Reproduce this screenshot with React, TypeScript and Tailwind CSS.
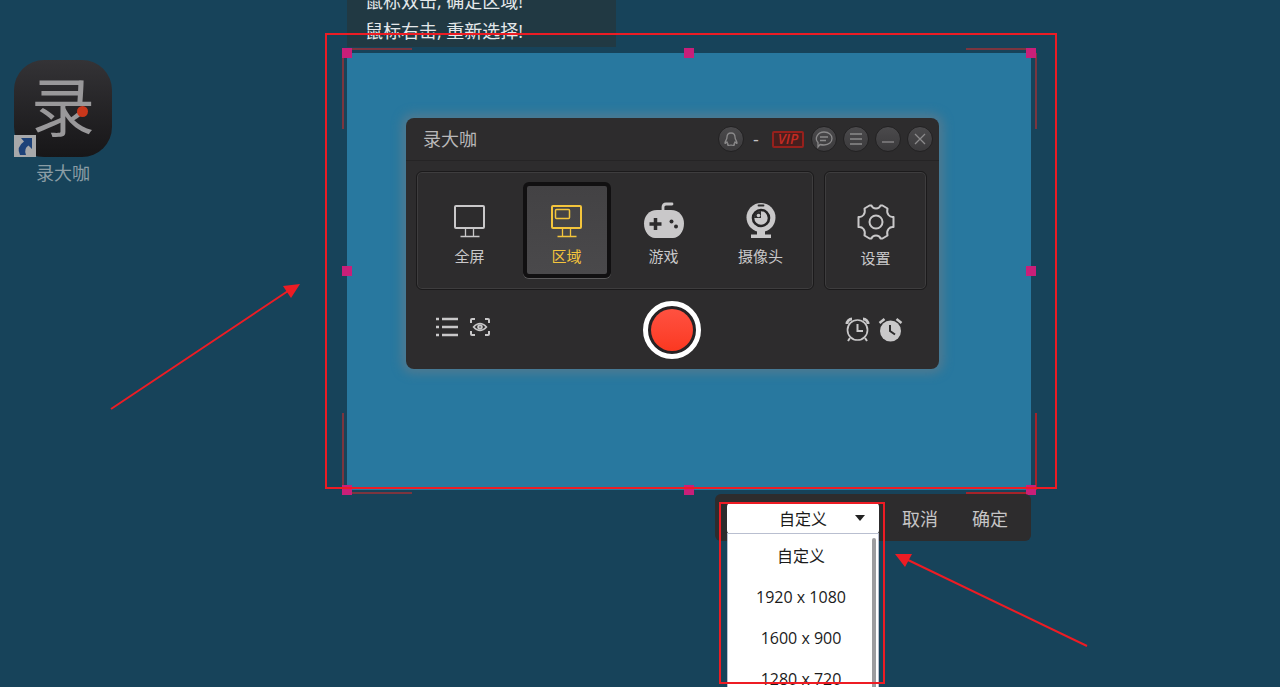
import React, { useState } from 'react';

const sizes = ['自定义', '1920 x 1080', '1600 x 900', '1280 x 720'];

const ScreenIcon = () => (
  <svg width="36" height="36" viewBox="0 0 36 36" fill="none" stroke="currentColor">
    <rect x="3" y="3" width="29" height="22" rx="1" strokeWidth="2" />
    <path d="M13.5 26v7M21.5 26v7M8.5 33.5h19" strokeWidth="1.3" />
  </svg>
);

const RegionIcon = () => (
  <svg width="36" height="36" viewBox="0 0 36 36" fill="none" stroke="currentColor">
    <rect x="3" y="3" width="29" height="22" rx="1" strokeWidth="2" />
    <rect x="6.5" y="6.5" width="14" height="9" rx="1" strokeWidth="1.5" />
    <path d="M13.5 26v7M21.5 26v7M8.5 33.5h19" strokeWidth="1.3" />
  </svg>
);

const GameIcon = () => (
  <svg width="42" height="38" viewBox="0 0 42 38">
    <path d="M20 12V6q0-3 3-3h6" fill="none" stroke="currentColor" strokeWidth="2.8" strokeLinecap="round" />
    <path
      d="M14 9h14c8 0 13 6 13 13.500 0 8-5 14.500-11 14.500H12C6 37 1 30.500 1 22.500 1 15 6 9 14 9z"
      fill="currentColor"
    />
    <path d="M12.500 17v12M6.500 23h12" stroke="#2d2c2d" strokeWidth="3.5" />
    <circle cx="28.500" cy="20.500" r="2" fill="#2d2c2d" />
    <circle cx="33" cy="25.500" r="2" fill="#2d2c2d" />
  </svg>
);

const CameraIcon = () => (
  <svg width="36" height="38" viewBox="0 0 36 38">
    <circle cx="18" cy="16.5" r="14.5" fill="currentColor" />
    <path d="M14 30h8v3.500h6V37H8v-3.500h6z" fill="currentColor" />
    <path d="M15.5 4.500h5" stroke="#2d2c2d" strokeWidth="1.800" strokeLinecap="round" />
    <circle cx="18" cy="17" r="8" fill="none" stroke="#242324" strokeWidth="2.600" />
    <path d="M18 17h-7a7 7 0 0 1 7-7z" fill="#2d2c2d" />
    <circle cx="15.500" cy="14.500" r="1.800" fill="currentColor" />
  </svg>
);

const GearIcon = () => (
  <svg width="38" height="38" viewBox="0 0 38 38" fill="none" stroke="currentColor" strokeWidth="2" strokeLinejoin="round">
    <path d="M12.500 2.500h2q1 3 4.500 3t4.500-3h2l5 3q-1 4 1 6.500t5 2v10q-3-.5-5 2t-1 6.500l-5 3h-2q-1-3-4.500-3t-4.500 3h-2l-5-3q1-4-1-6.500t-5-2V14q3 .5 5-2t1-6.500z" />
    <circle cx="19" cy="19" r="6.500" />
  </svg>
);

const ListIcon = () => (
  <svg width="24" height="20" viewBox="0 0 24 20" stroke="currentColor" strokeWidth="2.5">
    <path d="M1 2h3M1 10h3M1 18h3M7 2h16M7 10h16M7 18h16" />
  </svg>
);

const EyeIcon = () => (
  <svg width="22" height="20" viewBox="0 0 22 20" fill="none" stroke="currentColor" strokeWidth="2">
    <path d="M2 6V3q0-1 1-1h3M16 2h3q1 0 1 1v3M20 14v3q0 1-1 1h-3M6 18H3q-1 0-1-1v-3" />
    <path d="M4.5 10q6.500-7 13 0q-6.500 7-13 0z" strokeWidth="1.5" />
    <circle cx="11" cy="10" r="1.8" />
  </svg>
);

const AlarmIcon = () => (
  <svg width="25" height="25" viewBox="0 0 25 25" fill="none" stroke="currentColor">
    <circle cx="12.5" cy="13" r="10" strokeWidth="1.7" />
    <path d="M2 7a5 5 0 0 1 5-5M18 2a5 5 0 0 1 5 5" strokeWidth="3" />
    <path d="M5 21l-2 3M20 21l2 3" strokeWidth="2" />
    <path d="M12.5 7v7h5.5" strokeWidth="2" />
  </svg>
);

const AlarmFilledIcon = () => (
  <svg width="25" height="25" viewBox="0 0 25 25" fill="none" stroke="currentColor">
    <circle cx="12.5" cy="14" r="10.5" fill="currentColor" stroke="none" />
    <path d="M1.5 6l5-4M18.5 2l5 4" strokeWidth="2.5" />
    <path d="M12 8v6l5 3.5" stroke="#2d2c2d" strokeWidth="2" />
  </svg>
);

const modes = [
  { id: 'full', label: '全屏', icon: <ScreenIcon /> },
  { id: 'region', label: '区域', icon: <RegionIcon /> },
  { id: 'game', label: '游戏', icon: <GameIcon /> },
  { id: 'camera', label: '摄像头', icon: <CameraIcon /> },
];

const RoundButton = ({ label, children }: { label: string; children: React.ReactNode }) => (
  <button
    aria-label={label}
    className="flex h-[26px] w-[26px] items-center justify-center rounded-full border border-[#222122] bg-linear-to-b from-[#4b4a4c] to-[#3b3a3c] text-[#8b8a8b]"
  >
    <svg width="24" height="24" viewBox="0 0 24 24" fill="none" stroke="currentColor" strokeWidth="1.3">
      {children}
    </svg>
  </button>
);

const Recorder = () => {
  const [mode, setMode] = useState('region');

  return (
    <section className="absolute top-[118px] left-[406px] w-[533px] rounded-lg bg-[#2d2c2d] shadow-[0_0_10px_5px_#4c7a92]">
      <header className="flex h-[43px] items-center justify-between border-b border-[#252425] pr-1.5 pl-[17px]">
        <h1 className="text-lg text-[#b9b8b9]">录大咖</h1>
        <div className="flex items-center gap-1.5">
          <RoundButton label="账号">
            <path d="M12 6c-3 0-4 2-4 4 0 3-2 4-2 6 0 1 1 0 2-1l1 2c-1 1 0 2 3 1 3 1 4 0 3-1l1-2c1 1 2 2 2 1 0-2-2-3-2-6 0-2-1-4-4-4z" />
          </RoundButton>
          <span className="w-3 text-center text-lg text-[#c4c3c4]">-</span>
          <span className="mr-px ml-1 flex h-[17px] w-8 items-center justify-center rounded-xs border-2 border-[#96201c] bg-[#471f1e] text-sm font-semibold text-[#c32a22] italic">
            VIP
          </span>
          <RoundButton label="消息">
            <path d="M8 17.5l-2 2.5v-4.500C2 11 6 5 12 5c5 0 8 3 8 6.500S17 18 12 18q-2 0-4-.5zM8 10h8M8 13.500h6" />
          </RoundButton>
          <RoundButton label="菜单">
            <path d="M6 7h12M6 12h12M6 17h12" />
          </RoundButton>
          <RoundButton label="最小化">
            <path d="M6 15h12" />
          </RoundButton>
          <RoundButton label="关闭">
            <path d="M7 7l10 10M17 7L7 17" />
          </RoundButton>
        </div>
      </header>

      <div className="flex gap-2.5 pt-2.5 pr-3 pl-2.5">
        <div className="grid h-[119px] flex-1 grid-cols-4 items-center justify-items-center rounded-md border border-[#1b1a1b] pr-1 pb-0.5 pl-1 inset-shadow-[0_0_0_1px_#3e3d3e]">
          {modes.map(m => (
            <button
              key={m.id}
              onClick={() => setMode(m.id)}
              className={`flex h-24 w-[88px] flex-col items-center justify-end rounded-md border-4 pb-2 ${
                mode === m.id
                  ? 'border-[#111011] bg-linear-to-b from-[#434244] to-[#4a494b] text-[#f4c53c] shadow-[0_1px_0_#5c5b5c]'
                  : 'border-transparent text-[#c9c8c9]'
              }`}
            >
              {m.icon}
              <span className="mt-[7px] text-[15px] leading-5">{m.label}</span>
            </button>
          ))}
        </div>
        <button className="flex h-[119px] w-[103px] flex-col items-center justify-end rounded-md border border-[#1b1a1b] pb-[21px] text-[#c9c8c9] inset-shadow-[0_0_0_1px_#3e3d3e]">
          <GearIcon />
          <span className="mt-[7px] text-[15px] leading-5">设置</span>
        </button>
      </div>

      <footer className="grid h-[79px] grid-cols-3 items-center pr-[30px] pl-[29px] text-[#c9c8c9]">
        <div className="flex items-center gap-2.5 pb-1.5">
          <button aria-label="录制列表"><ListIcon /></button>
          <button aria-label="预览"><EyeIcon /></button>
        </div>
        <button
          aria-label="开始录制"
          className="flex h-[58px] w-[58px] items-center justify-center justify-self-center rounded-full border-[5px] border-white bg-[#262224]"
        >
          <span className="h-[42px] w-[42px] rounded-full bg-linear-to-b from-[#ff5140] to-[#fb3820]" />
        </button>
        <div className="flex items-center justify-end gap-2 pr-1.5">
          <button aria-label="定时开始"><AlarmIcon /></button>
          <button aria-label="定时结束"><AlarmFilledIcon /></button>
        </div>
      </footer>
    </section>
  );
};

const SelectionFrame = () => (
  <div className="absolute top-[53px] left-[347px] h-[437px] w-[684px] bg-[#28789f]">
    <svg className="absolute inset-0 h-full w-full overflow-visible" fill="none">
      <g stroke="#7b353f" strokeWidth="2">
        <path d="M0-4h65M-4 0v76M619-4h65M689 0v76M-4 360v77M0 440h65" />
        <path d="M689 360v77M619 440h65" stroke="#a52329" />
      </g>
      <g fill="#c91f79">
        <rect x="-5" y="-5" width="10" height="10" />
        <rect x="337" y="-5" width="10" height="10" />
        <rect x="679" y="-5" width="10" height="10" />
        <rect x="-5" y="213" width="10" height="10" />
        <rect x="679" y="213" width="10" height="10" />
        <rect x="-5" y="432" width="10" height="10" />
        <rect x="337" y="432" width="10" height="10" />
        <rect x="679" y="432" width="10" height="10" />
      </g>
    </svg>
  </div>
);

const SizeBar = () => {
  const [size, setSize] = useState(sizes[0]);

  return (
    <div className="absolute top-[494px] left-[715px] flex h-[47px] w-[316px] items-start rounded-md bg-[#2d2c2d] pt-[9px] pl-3 text-lg text-[#c6c5c6]">
      <div className="relative w-[152px] text-base text-[#1b1b1b]">
        <select
          aria-label="录制尺寸"
          value={size}
          onChange={e => setSize(e.target.value)}
          className="block h-[31px] w-full appearance-none rounded-sm bg-white text-center [text-align-last:center]"
        >
          {sizes.map(s => (
            <option key={s}>{s}</option>
          ))}
        </select>
        <svg className="pointer-events-none absolute top-3 right-3.5" width="10" height="6" viewBox="0 0 10 6">
          <path d="M0 0h10L5 6z" fill="#222" />
        </svg>
        <div className="absolute top-[30px] left-0 flex w-full border border-b-0 border-[#b9bfd0] bg-white pt-0.5">
          <ul role="listbox" className="flex-1 pl-0.5">
            {sizes.map(s => (
              <li
                key={s}
                role="option"
                aria-selected={s === size}
                onClick={() => setSize(s)}
                className="h-[41px] text-center leading-[41px]"
              >
                {s}
              </li>
            ))}
          </ul>
          <div className="mt-0.5 mr-0.5 w-1 rounded-t-full bg-[#9c9c9f]" />
        </div>
      </div>
      <button className="ml-[23px] h-[31px]">取消</button>
      <button className="ml-[34px] h-[31px]">确定</button>
    </div>
  );
};

const Annotations = () => (
  <svg className="pointer-events-none absolute inset-0 h-full w-full" fill="none" stroke="#ed1c24" strokeWidth="2">
    <rect x="326" y="34" width="730" height="454" />
    <rect x="720" y="503" width="164" height="180" />
    <path d="M111 409L288 291M1087 646L908 560" />
    <path d="M300 284l-17 2 8 12zM895 554h17l-7 13z" fill="#ed1c24" stroke="none" />
  </svg>
);

const App: React.FC = () => {
  return (
    <main className="relative h-screen overflow-hidden bg-[#17435a] font-['Open_Sans','Noto_Sans_CJK_SC',sans-serif]">
      <a href="#" className="absolute top-[60px] left-[14px] flex w-[98px] flex-col items-center text-[#8b9da5]">
        <span className="relative flex h-[97px] w-full items-center justify-center rounded-[30px] bg-linear-to-b from-[#343336] to-[#171618] pb-1 text-[64px] text-[#99989a]">
          录
          <span className="absolute top-[46px] right-6 h-[11px] w-[11px] rounded-full bg-[#c9371b]" />
          <svg className="absolute bottom-0 left-0" width="22" height="22" viewBox="0 0 22 22">
            <rect width="22" height="22" fill="#a7a8aa" />
            <path d="M7 3h11v11l-3.500-3.500q-5 3-2.500 9.500h-6q-4-8 4-13.500z" fill="#1d4279" />
          </svg>
        </span>
        <span className="mt-0.5 text-lg leading-7">录大咖</span>
      </a>

      <div className="absolute top-0 left-[347px] flex h-[47px] w-[269px] flex-col justify-end bg-[#213943] pb-px pl-[18px] text-lg leading-[30px] text-[#e4e8ea]">
        <p>鼠标双击, 确定区域!</p>
        <p>鼠标右击, 重新选择!</p>
      </div>

      <SelectionFrame />
      <Recorder />
      <SizeBar />
      <Annotations />
    </main>
  );
};

export default App;
